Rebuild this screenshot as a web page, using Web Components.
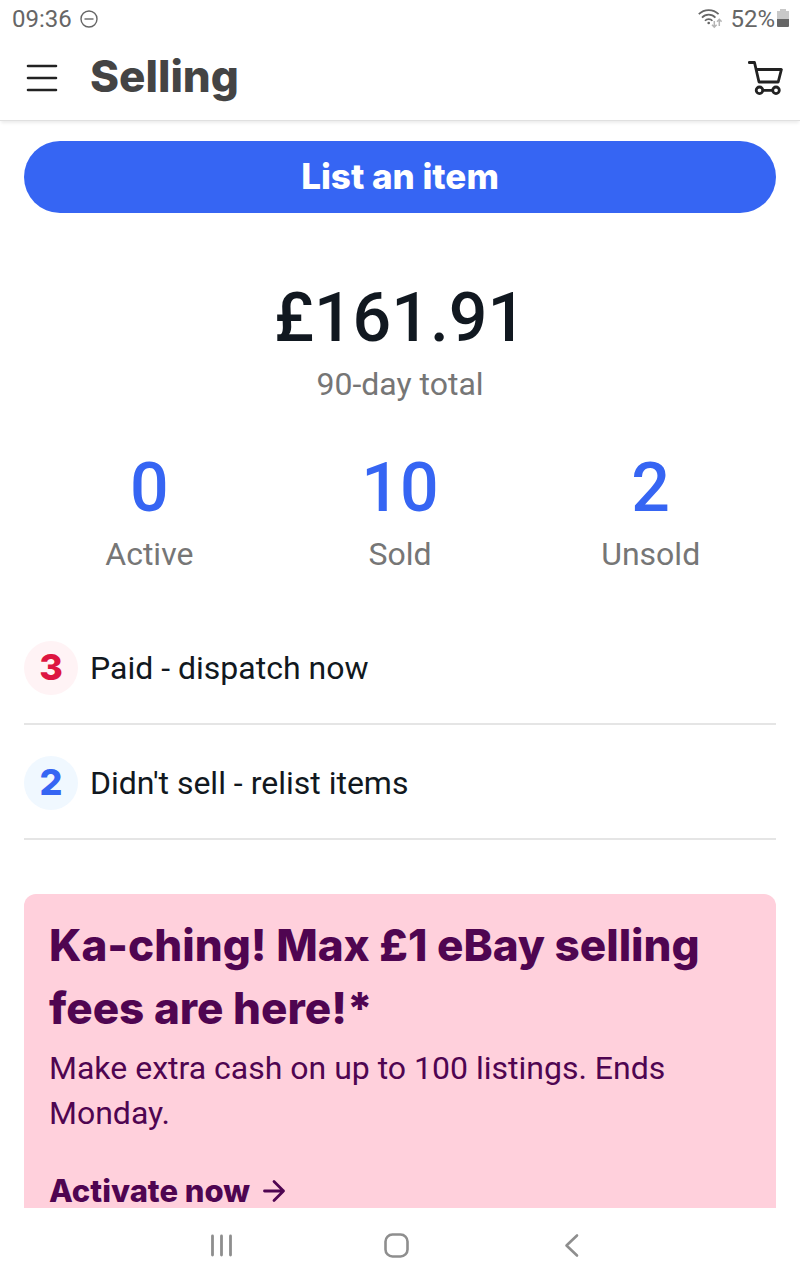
<!DOCTYPE html>
<html lang="en-GB">
<head>
<meta charset="utf-8">
<meta name="viewport" content="width=device-width, initial-scale=1">
<title>Selling</title>
<style>
  :root {
    --display: Inter, "Liberation Sans", sans-serif;
    --text: Roboto, "Liberation Sans", sans-serif;
    --blue: #3665f3;
    --ink: #111820;
    --grey: #767676;
    --plum: #4f0551;
    --rule: #e5e5e5;
  }
  body { margin: 0; background: #fff; color: var(--ink); font-family: var(--text); }
</style>
</head>
<body>
<selling-app></selling-app>

<script>
const define = (name, html) => {
  const template = document.createElement('template');
  template.innerHTML = html;
  customElements.define(name, class extends HTMLElement {
    constructor() {
      super();
      this.attachShadow({ mode: 'open' }).append(template.content.cloneNode(true));
    }
  });
};

define('status-bar', `
  <style>
    :host { display: flex; align-items: center; justify-content: space-between; height: 37px; padding: 0 11px 0 12px; color: #666; font-size: 24px; line-height: 36px; }
    .group { display: flex; align-items: center; }
    .time { gap: 8px; }
    svg { display: block; }
    .wifi { margin-right: 8px; }
    .battery { margin: 0 0 2px 2px; }
  </style>
  <div class="group time"><span>09:36</span>
    <svg width="18" height="18" viewBox="0 0 18 18" fill="none" stroke="#666" stroke-width="1.4"><circle cx="9" cy="9" r="8"/><path d="M4.5 9h9"/></svg>
  </div>
  <div class="group">
    <svg class="wifi" width="24" height="20" viewBox="0 0 24 20" fill="none" stroke="#666" stroke-width="1.7">
      <path d="M.8 5.200C6.200-.2 15.200-.2 20.600 5.200M4 8.600c3.600-3.900 9.800-3.900 13.400 0M7 11.800c2-2.300 5.400-2.300 7.400 0"/>
      <circle cx="10.700" cy="14" r="1.300" fill="#666" stroke="none"/>
      <path stroke="#b5b5b5" stroke-width="1.500" d="M16.300 12v6M14 15.800l2.300 2.400 2.300-2.400M21.300 17v-6.500M19 12.700l2.300-2.400 2.300 2.400"/>
    </svg>
    <span>52%</span>
    <svg class="battery" width="12" height="20" viewBox="0 0 12 20"><path fill="#c8c8c8" d="M3 1h6v2h3v9H0V3h3z"/><path fill="#666" d="M0 11h12v7a1 1 0 0 1-1 1H1a1 1 0 0 1-1-1z"/></svg>
  </div>
`);

define('app-header', `
  <style>
    :host { display: flex; align-items: center; height: 83px; padding: 0 16px 0 24px; border-bottom: 1px solid #e0e0e0; box-shadow: 0 3px 3px -1px rgba(0,0,0,.08); }
    button { border: 0; padding: 0 0 2px; background: none; color: #222; display: block; }
    svg { display: block; }
    h1 { flex: 1; margin: 0 0 0 30px; font: 800 44px/60px var(--display); color: #444; padding-bottom: 6px; }
  </style>
  <button aria-label="Menu"><svg width="36" height="32" viewBox="0 0 36 32" stroke="currentColor" stroke-width="2.600" stroke-linecap="round"><path d="M4 4h28M4 16h28M4 28h28"/></svg></button>
  <h1><slot></slot></h1>
  <button aria-label="Basket"><svg width="36" height="36" viewBox="0 0 36 36" fill="none" stroke="currentColor" stroke-width="2.800" stroke-linejoin="round" stroke-linecap="round"><path d="M1.300 2.500h5.200l4.500 19.500h19.200l3.200-12.500H8.500M15 30.300h9"/><circle cx="11.500" cy="30.300" r="3.300"/><circle cx="28" cy="30.300" r="3.300"/></svg></button>
`);

define('primary-button', `
  <style>
    :host { display: block; }
    button { display: block; width: 100%; height: 72px; border: 0; border-radius: 36px; padding: 0 0 2px; background: var(--blue); color: #fff; font: 800 35px/48px var(--display); }
  </style>
  <button><slot></slot></button>
`);

define('sales-figure', `
  <style>
    :host { display: block; text-align: center; color: var(--ink); }
    .value { font-size: 68px; line-height: 88px; font-weight: 500; }
    .label { font-size: 32px; line-height: 44px; color: var(--grey); }
  </style>
  <div class="value"><slot name="value"></slot></div>
  <div class="label"><slot></slot></div>
`);

define('task-row', `
  <style>
    :host { display: block; border-bottom: 2px solid var(--rule); --tone: var(--blue); --tint: #f0f8ff; }
    :host([urgent]) { --tone: #dd1540; --tint: #fff3f5; }
    a { display: flex; align-items: center; gap: 12px; padding: 31px 0 28px; color: inherit; text-decoration: none; font-size: 32px; line-height: 54px; }
    .badge { flex: none; width: 54px; height: 54px; border-radius: 50%; background: var(--tint); color: var(--tone); font: 800 36px/52px var(--display); text-align: center; }
  </style>
  <a href="#"><span class="badge"><slot name="count"></slot></span><span><slot></slot></span></a>
`);

define('promo-card', `
  <style>
    :host { display: block; padding: 20px 25px 32px; border-radius: 12px; background: #ffd0dc; color: var(--plum); }
    h2 { margin: 0 0 6px; font: 800 44px/63px var(--display); }
    p { margin: 0 0 39px; font-size: 32px; line-height: 45px; }
    a { display: flex; width: fit-content; align-items: center; gap: 12px; color: inherit; text-decoration: none; font: 800 31px/32px var(--display); }
    svg { display: block; }
  </style>
  <h2><slot name="title"></slot></h2>
  <p><slot></slot></p>
  <a href="#"><slot name="action"></slot><svg width="24" height="24" viewBox="0 0 24 24" fill="none" stroke="currentColor" stroke-width="2.800" stroke-linecap="round" stroke-linejoin="round"><path d="M2.500 12h19M12 2.500l9.500 9.500-9.500 9.500"/></svg></a>
`);

define('system-nav', `
  <style>
    :host { display: flex; justify-content: center; align-items: center; height: 72px; padding-right: 8px; background: #fff; gap: 135px; }
    button { width: 40px; height: 40px; border: 0; padding: 0; margin: 2px 0 0; background: none; color: #8e8e8e; }
    svg { display: block; }
  </style>
  <button aria-label="Recent apps"><svg width="40" height="40" viewBox="0 0 40 40" stroke="currentColor" stroke-width="2.800" stroke-linecap="round"><path d="M11.500 11v19M20.500 11v19M29.500 11v19"/></svg></button>
  <button aria-label="Home"><svg width="40" height="40" viewBox="0 0 40 40" fill="none" stroke="currentColor" stroke-width="2.600"><rect x="9.500" y="9.500" width="22" height="22" rx="7"/></svg></button>
  <button aria-label="Back"><svg width="40" height="40" viewBox="0 0 40 40" fill="none" stroke="currentColor" stroke-width="2.600" stroke-linecap="round" stroke-linejoin="round"><path d="M26 10.500l-10.500 10 10.500 10"/></svg></button>
`);

define('selling-app', `
  <style>
    :host { display: flex; flex-direction: column; height: 100vh; }
    status-bar, app-header, system-nav { flex: none; }
    main { flex: 1; min-height: 0; overflow-y: auto; scrollbar-width: none; padding: 20px 24px 0; }
    .total { margin: 61px 0 38px; }
    .stats { display: grid; grid-template-columns: repeat(3, 1fr); margin-bottom: 34px; }
    .stats a { color: var(--blue); text-decoration: none; }
    .tasks { margin-bottom: 54px; }
  </style>
  <status-bar></status-bar>
  <app-header>Selling</app-header>
  <main>
    <primary-button>List an item</primary-button>
    <sales-figure class="total"><span slot="value">£161.91</span>90-day total</sales-figure>
    <nav class="stats" aria-label="Listings">
      <sales-figure><a href="#" slot="value">0</a>Active</sales-figure>
      <sales-figure><a href="#" slot="value">10</a>Sold</sales-figure>
      <sales-figure><a href="#" slot="value">2</a>Unsold</sales-figure>
    </nav>
    <section class="tasks" aria-label="Tasks">
      <task-row urgent><span slot="count">3</span>Paid - dispatch now</task-row>
      <task-row><span slot="count">2</span>Didn't sell - relist items</task-row>
    </section>
    <promo-card><span slot="title">Ka-ching! Max £1 eBay selling fees are here!*</span>Make extra cash on up to 100 listings. Ends Monday.<span slot="action">Activate now</span></promo-card>
  </main>
  <system-nav></system-nav>
`);
</script>
</body>
</html>
